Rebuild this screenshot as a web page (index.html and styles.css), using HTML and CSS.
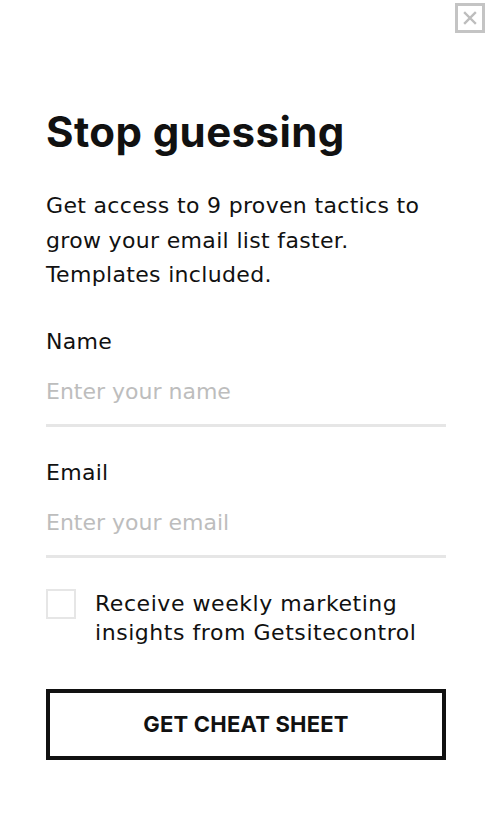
FILE: index.html
```html
<!DOCTYPE html>
<html lang="en">
<head>
<meta charset="utf-8">
<title>Stop guessing</title>
<link rel="stylesheet" href="styles.css">
</head>
<body>
<div class="popup">
  <div class="close-row">
    <button class="close" aria-label="Close">
      <svg width="14" height="14" viewBox="0 0 14 14"><path d="M2 2 L12 12 M12 2 L2 12" stroke="#bdbdbd" stroke-width="2.4" stroke-linecap="square"/></svg>
    </button>
  </div>
  <div class="content">
    <h1 class="title">Stop guessing</h1>
    <p class="lead">Get access to 9 proven tactics to grow your email list faster. Templates included.</p>
    <form class="form">
      <label class="field">
        <span class="label">Name</span>
        <input class="input" type="text" placeholder="Enter your name">
      </label>
      <label class="field">
        <span class="label">Email</span>
        <input class="input" type="email" placeholder="Enter your email">
      </label>
      <label class="check">
        <span class="box"></span>
        <span class="check-text">Receive weekly marketing insights from Getsitecontrol</span>
      </label>
      <button class="submit" type="button">GET CHEAT SHEET</button>
    </form>
  </div>
</div>
</body>
</html>
```
FILE: styles.css
```css
* { box-sizing: border-box; }
html, body { margin: 0; padding: 0; background: #fff; }
body { font-family: "DejaVu Sans", "Noto Sans", sans-serif; color: #111; }
.popup { width: 504px; min-height: 834px; }
.close-row { display: flex; justify-content: flex-end; padding: 3px 19px 0 0; }
.close {
  width: 30px; height: 30px; border: 3px solid #c4c4c4; background: #fff;
  display: flex; align-items: center; justify-content: center; padding: 0; cursor: pointer;
}
.close svg { display: block; }
.content { padding: 74px 58px 0 46px; }
.title {
  margin: 0; font-family: Inter, "DejaVu Sans", sans-serif; font-size: 42px; line-height: 50px;
  font-weight: 700; letter-spacing: 0.4px; color: #111;
}
.lead { margin: 32px 0 0; max-width: 390px; font-size: 22px; line-height: 34.5px; letter-spacing: 0.33px; color: #111; }
.form { margin-top: 34px; display: flex; flex-direction: column; }
.field { display: flex; flex-direction: column; margin-bottom: 31px; }
.label { font-size: 22px; line-height: 30px; letter-spacing: 0.3px; color: #111; }
.input {
  border: none; border-bottom: 3px solid #e6e6e6; outline: none; padding: 0 0 17px; margin-top: 20px;
  font-family: inherit; font-size: 22px; line-height: 30px; height: 50px; color: #111; background: transparent; width: 100%;
}
.input::placeholder { color: #bdbdbd; }
.check { display: flex; align-items: flex-start; gap: 19px; }
.box { flex: none; width: 30px; height: 30px; border: 2px solid #e6e6e6; }
.check-text { font-size: 22px; line-height: 29px; letter-spacing: 0.55px; color: #111; }
.submit {
  margin-top: 42px; height: 71px; width: 400px; border: 4px solid #111; background: #fff;
  font-family: Inter, "DejaVu Sans", sans-serif; font-size: 22px; font-weight: 700; color: #111;
  letter-spacing: 0.2px; cursor: pointer; padding: 0;
}
```
